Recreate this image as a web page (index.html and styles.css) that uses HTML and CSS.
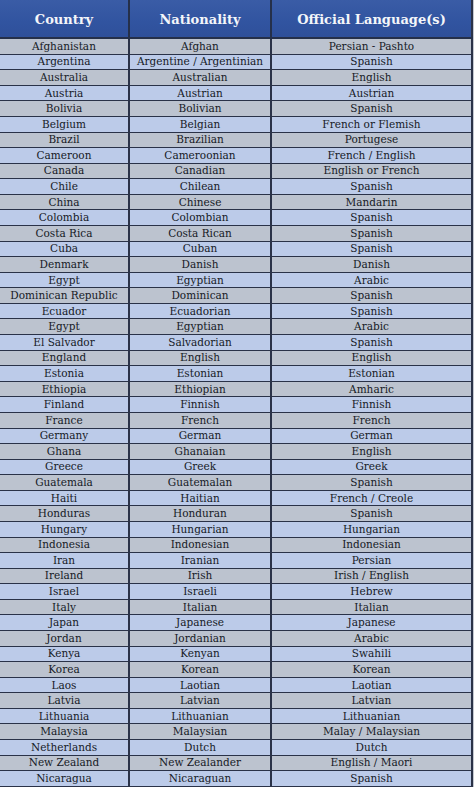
FILE: index.html
```html
<!DOCTYPE html>
<html>
<head>
<meta charset="utf-8">
<link rel="stylesheet" href="styles.css">
</head>
<body>
<table class="tbl">
<colgroup><col class="c1"><col class="c2"><col class="c3"></colgroup>
<thead>
<tr><th>Country</th><th>Nationality</th><th>Official Language(s)</th></tr>
</thead>
<tbody>
<tr><td>Afghanistan</td><td>Afghan</td><td>Persian - Pashto</td></tr>
<tr><td>Argentina</td><td>Argentine / Argentinian</td><td>Spanish</td></tr>
<tr><td>Australia</td><td>Australian</td><td>English</td></tr>
<tr><td>Austria</td><td>Austrian</td><td>Austrian</td></tr>
<tr><td>Bolivia</td><td>Bolivian</td><td>Spanish</td></tr>
<tr><td>Belgium</td><td>Belgian</td><td>French or Flemish</td></tr>
<tr><td>Brazil</td><td>Brazilian</td><td>Portugese</td></tr>
<tr><td>Cameroon</td><td>Cameroonian</td><td>French / English</td></tr>
<tr><td>Canada</td><td>Canadian</td><td>English or French</td></tr>
<tr><td>Chile</td><td>Chilean</td><td>Spanish</td></tr>
<tr><td>China</td><td>Chinese</td><td>Mandarin</td></tr>
<tr><td>Colombia</td><td>Colombian</td><td>Spanish</td></tr>
<tr><td>Costa Rica</td><td>Costa Rican</td><td>Spanish</td></tr>
<tr><td>Cuba</td><td>Cuban</td><td>Spanish</td></tr>
<tr><td>Denmark</td><td>Danish</td><td>Danish</td></tr>
<tr><td>Egypt</td><td>Egyptian</td><td>Arabic</td></tr>
<tr><td>Dominican Republic</td><td>Dominican</td><td>Spanish</td></tr>
<tr><td>Ecuador</td><td>Ecuadorian</td><td>Spanish</td></tr>
<tr><td>Egypt</td><td>Egyptian</td><td>Arabic</td></tr>
<tr><td>El Salvador</td><td>Salvadorian</td><td>Spanish</td></tr>
<tr><td>England</td><td>English</td><td>English</td></tr>
<tr><td>Estonia</td><td>Estonian</td><td>Estonian</td></tr>
<tr><td>Ethiopia</td><td>Ethiopian</td><td>Amharic</td></tr>
<tr><td>Finland</td><td>Finnish</td><td>Finnish</td></tr>
<tr><td>France</td><td>French</td><td>French</td></tr>
<tr><td>Germany</td><td>German</td><td>German</td></tr>
<tr><td>Ghana</td><td>Ghanaian</td><td>English</td></tr>
<tr><td>Greece</td><td>Greek</td><td>Greek</td></tr>
<tr><td>Guatemala</td><td>Guatemalan</td><td>Spanish</td></tr>
<tr><td>Haiti</td><td>Haitian</td><td>French / Creole</td></tr>
<tr><td>Honduras</td><td>Honduran</td><td>Spanish</td></tr>
<tr><td>Hungary</td><td>Hungarian</td><td>Hungarian</td></tr>
<tr><td>Indonesia</td><td>Indonesian</td><td>Indonesian</td></tr>
<tr><td>Iran</td><td>Iranian</td><td>Persian</td></tr>
<tr><td>Ireland</td><td>Irish</td><td>Irish / English</td></tr>
<tr><td>Israel</td><td>Israeli</td><td>Hebrew</td></tr>
<tr><td>Italy</td><td>Italian</td><td>Italian</td></tr>
<tr><td>Japan</td><td>Japanese</td><td>Japanese</td></tr>
<tr><td>Jordan</td><td>Jordanian</td><td>Arabic</td></tr>
<tr><td>Kenya</td><td>Kenyan</td><td>Swahili</td></tr>
<tr><td>Korea</td><td>Korean</td><td>Korean</td></tr>
<tr><td>Laos</td><td>Laotian</td><td>Laotian</td></tr>
<tr><td>Latvia</td><td>Latvian</td><td>Latvian</td></tr>
<tr><td>Lithuania</td><td>Lithuanian</td><td>Lithuanian</td></tr>
<tr><td>Malaysia</td><td>Malaysian</td><td>Malay / Malaysian</td></tr>
<tr><td>Netherlands</td><td>Dutch</td><td>Dutch</td></tr>
<tr><td>New Zealand</td><td>New Zealander</td><td>English / Maori</td></tr>
<tr><td>Nicaragua</td><td>Nicaraguan</td><td>Spanish</td></tr>
</tbody>
</table>
</body>
</html>
```
FILE: styles.css
```css
html, body {
  margin: 0;
  padding: 0;
  background: #c4c8d0;
}
.tbl {
  width: 472px;
  height: 787px;
  border-collapse: collapse;
  table-layout: fixed;
  font-family: "DejaVu Serif", serif;
  color: #161a26;
  border-right: 2px solid #2a3248;
}
.c1 { width: 129px; }
.c2 { width: 142px; }
.c3 { width: 201px; }
.tbl th {
  height: 35px;
  padding: 2px 0 0;
  background: linear-gradient(#3a5ca6, #3154a0 60%, #2f509a);
  color: #f4f6fa;
  font-size: 13px;
  font-weight: bold;
  text-align: center;
  border-left: 2px solid #25304a;
  border-bottom: 2px solid #25304a;
}
.tbl th:first-child, .tbl td:first-child { border-left: none; }
.tbl td {
  padding: 0;
  font-size: 10.5px;
  line-height: 13px;
  text-align: center;
  white-space: nowrap;
  overflow: hidden;
  border-left: 2px solid #2a3248;
  border-bottom: 1.6px solid #2a3248;
}
.tbl tbody tr:nth-child(odd) td { background: #bcc3cf; }
.tbl tbody tr:nth-child(even) td { background: #bccbe9; }
```
